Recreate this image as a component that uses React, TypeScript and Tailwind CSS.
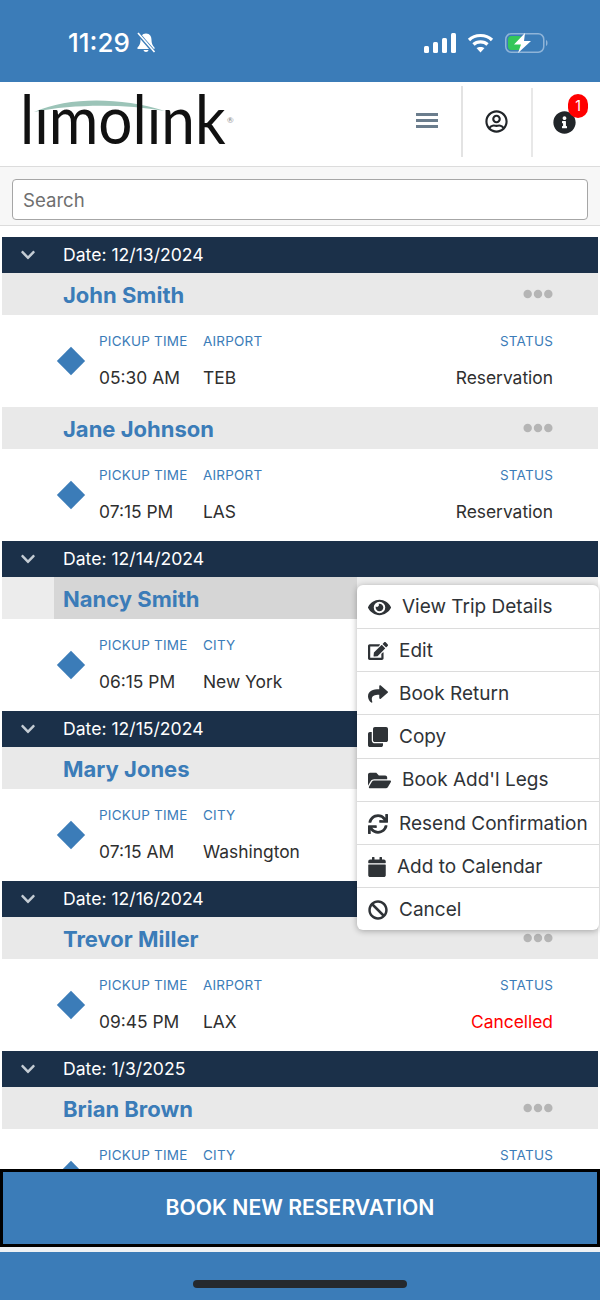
import { FaBan, FaCalendar, FaChevronDown, FaClone, FaEdit, FaEllipsisH, FaEye, FaFolderOpen, FaInfoCircle, FaRegUserCircle, FaShare, FaSync } from 'react-icons/fa';

const trips = [
  { date: '12/13/2024', rows: [
    { name: 'John Smith', label: 'AIRPORT', place: 'TEB', time: '05:30 AM', status: 'Reservation' },
    { name: 'Jane Johnson', label: 'AIRPORT', place: 'LAS', time: '07:15 PM', status: 'Reservation' },
  ] },
  { date: '12/14/2024', rows: [{ name: 'Nancy Smith', label: 'CITY', place: 'New York', time: '06:15 PM', status: '', active: true }] },
  { date: '12/15/2024', rows: [{ name: 'Mary Jones', label: 'CITY', place: 'Washington', time: '07:15 AM', status: '' }] },
  { date: '12/16/2024', rows: [{ name: 'Trevor Miller', label: 'AIRPORT', place: 'LAX', time: '09:45 PM', status: 'Cancelled' }] },
  { date: '1/3/2025', rows: [{ name: 'Brian Brown', label: 'CITY', place: '', time: '', status: '' }] },
];

const menu = [
  { icon: <FaEye className="w-[23px] h-[23px]" />, label: 'View Trip Details' },
  { icon: <FaEdit className="w-5 h-5" />, label: 'Edit' },
  { icon: <FaShare className="w-5 h-5" />, label: 'Book Return' },
  { icon: <FaClone className="w-5 h-5" />, label: 'Copy' },
  { icon: <FaFolderOpen className="w-[23px] h-[23px]" />, label: "Book Add'l Legs" },
  { icon: <FaSync className="w-5 h-5" />, label: 'Resend Confirmation' },
  { icon: <FaCalendar className="w-[18px] h-5" />, label: 'Add to Calendar' },
  { icon: <FaBan className="w-5 h-5" />, label: 'Cancel' },
];

const StatusBar = () => (
  <div className="h-[82px] shrink-0 bg-[#3b7cb8] text-white flex items-center pt-1 pl-[68px] pr-[51px] justify-between">
    <div className="flex items-center gap-[6px]">
      <span className="text-[26px] font-medium leading-none">11:29</span>
      <svg width="20" height="22" viewBox="0 0 20 22" fill="white">
        <path d="M10 1.5 C6 1.5 4.5 4.5 4.5 8 C4.5 11.5 3.5 13.5 1.5 15.5 V17 H18.5 V15.5 C16.5 13.5 15.5 11.5 15.5 8 C15.5 4.5 14 1.5 10 1.5 Z" />
        <path d="M7.5 18 H12.5 C12.2 20.6 7.8 20.6 7.5 18 Z" />
        <path d="M2 1.5 L18.5 20.5" stroke="#3b7cb8" strokeWidth="3.6" />
        <path d="M2 1 L18.5 20" stroke="white" strokeWidth="1.6" />
      </svg>
    </div>
    <div className="flex items-center gap-[11px]">
      <svg width="32" height="20" viewBox="0 0 32 20" fill="white">
        <rect x="0" y="13" width="5" height="7" rx="1.5" />
        <rect x="9" y="9" width="5" height="11" rx="1.5" />
        <rect x="18" y="5" width="5" height="15" rx="1.5" />
        <rect x="27" y="0" width="5" height="20" rx="1.5" />
      </svg>
      <svg width="27" height="20" viewBox="0 0 27 20" fill="none" stroke="white" strokeWidth="3.2">
        <path d="M2 7 C8 1 19 1 25 7" />
        <path d="M6.5 11.5 C10 8 17 8 20.5 11.5" />
        <path d="M13.5 19.5 L9.5 15 C11.5 13.5 15.5 13.5 17.5 15 Z" fill="white" stroke="none" />
      </svg>
      <svg width="44" height="20" viewBox="0 0 44 20" fill="none">
        <rect x="0.75" y="0.75" width="38" height="18.5" rx="5.5" stroke="#8fb4d8" strokeWidth="1.5" />
        <rect x="3" y="3" width="14" height="14" rx="3.5" fill="#34c759" />
        <path d="M41 7 C43 7.5 43 12.5 41 13 Z" fill="#8fb4d8" />
        <path d="M20 0 L9 11.5 H16 L13 20 L26 8 H19 Z" fill="white" />
      </svg>
    </div>
  </div>
);

const Header = () => (
  <div className="h-[84px] shrink-0 bg-white flex items-stretch">
    <div className="relative w-[416px] pl-[20px] font-['Lato',sans-serif]">
      <svg className="absolute left-[34px] top-[17px]" width="132" height="14" viewBox="0 0 132 14">
        <path d="M0 13 C35 -2 85 -2 131 12 C90 5 40 5 0 13 Z" fill="#9cc4b8" />
      </svg>
      <span className="relative block w-fit origin-left scale-x-[0.9] text-[67px] leading-[78px] -mt-[3px] font-normal text-[#111]">lımolınk</span>
      <span className="absolute left-[227px] top-[34px] text-[8px] leading-none text-[#888]">®</span>
    </div>
    <div className="w-[45px] flex flex-col justify-center gap-[3px] pb-[7px]">
      <div className="w-[22px] h-[3px] bg-[#6b7d8d]" />
      <div className="w-[22px] h-[3px] bg-[#6b7d8d]" />
      <div className="w-[22px] h-[3px] bg-[#6b7d8d]" />
    </div>
    <div className="w-[70px] flex items-center justify-center border-l-2 border-[#e3e3e3] mt-[4px] mb-[9px] pr-[2px]">
      <FaRegUserCircle className="w-[23px] h-[23px] text-[#212529]" />
    </div>
    <div className="relative flex-1 flex items-center justify-center border-l-2 border-[#e8e8e8] mt-[6px] mb-[9px] pr-[5px]">
      <FaInfoCircle className="w-[23px] h-[23px] text-[#212529]" />
      <span className="absolute left-[35px] top-[6px] w-5 h-6 rounded-full bg-[#ff0000] text-white text-[14px] leading-6 text-center">1</span>
    </div>
  </div>
);

const Column = ({ label, value, tone }: { label: string; value: string; tone?: string }) => (
  <>
    <div className="h-4 text-[13.5px] leading-4 text-[#3b7cb8] tracking-[0.2px]">{label}</div>
    <div className={`mt-[18px] h-[22px] text-[17.4px] leading-[22px] ${tone ?? 'text-[#2f2f2f]'}`}>{value}</div>
  </>
);

const TripRow = ({ row }: { row: (typeof trips)[number]['rows'][number] }) => (
  <div>
    <div className={`h-[42px] flex items-center justify-between pr-[45px] ${row.active ? 'bg-[#ececec]' : 'bg-[#e9e9e9] pl-[61px]'}`}>
      {row.active ? (
        <div className="ml-[52px] w-[303px] h-full bg-[#d6d6d6] flex items-center pl-[9px] pt-[2px] text-[22px] font-bold text-[#3b7cb8]">{row.name}</div>
      ) : (
        <span className="text-[22px] font-bold text-[#3b7cb8] pt-[2px]">{row.name}</span>
      )}
      <FaEllipsisH className="w-[30px] h-[30px] text-[#b5b5b5]" />
    </div>
    <div className="h-[92px] bg-white flex items-center pl-[54px] pr-[45px]">
      <div className="w-[29px] h-[30px] flex items-center justify-center">
        <div className="w-[20px] h-[20px] rotate-45 bg-[#3b7cb8]" />
      </div>
      <div className="ml-[14px] w-[104px]">
        <Column label="PICKUP TIME" value={row.time} />
      </div>
      <div className="flex-1">
        <Column label={row.label} value={row.place} />
      </div>
      <div className="text-right">
        <Column label="STATUS" value={row.status} tone={row.status === 'Cancelled' ? 'text-[#ff0000]' : undefined} />
      </div>
    </div>
  </div>
);

export default function App() {
  return (
    <div className="relative w-[600px] h-[1300px] overflow-hidden flex flex-col bg-white font-['Inter',sans-serif]">
      <StatusBar />
      <Header />
      <div className="h-[60px] shrink-0 bg-[#f7f7f7] border-y border-[#dcdcdc] px-3 pt-[12px]">
        <input
          placeholder="Search"
          className="block w-full h-[41px] bg-white border border-[#a6a6a6] rounded-[4px] px-[10px] text-[18.6px] placeholder:text-[#6f6f6f] outline-none"
        />
      </div>
      <div className="flex-1 min-h-0 overflow-hidden pt-[11px] px-[2px]">
        {trips.map((group) => (
          <div key={group.date}>
            <div className="h-9 bg-[#1b3049] flex items-center text-white">
              <FaChevronDown className="ml-[18px] w-4 h-4 text-[#c4ccd4]" />
              <span className="ml-[27px] text-[17.6px]">Date: {group.date}</span>
            </div>
            {group.rows.map((row) => <TripRow key={row.name} row={row} />)}
          </div>
        ))}
      </div>
      <button className="h-[78px] shrink-0 bg-[#3b7cb8] border-[3px] border-black text-white text-[21.2px] font-semibold">
        BOOK NEW RESERVATION
      </button>
      <div className="h-[5px] shrink-0 bg-[#eef1f4]" />
      <div className="h-[48px] shrink-0 bg-[#3b7cb8] flex justify-center pt-[28px]">
        <div className="w-[214px] h-2 rounded-full bg-[#25292e]" />
      </div>

      {/* trip actions dropdown */}
      <div className="absolute left-[357px] top-[585px] w-[242px] rounded-[6px] bg-white shadow-[0_1px_6px_rgba(0,0,0,0.3)] text-[#2f3337]">
        {menu.map((item, i) => (
          <div
            key={item.label}
            className={`h-[43.15px] pl-[11px] pt-[2px] flex items-center gap-[11px] text-[19px] ${i > 0 ? 'border-t border-[#dcdcdc]' : ''}`}
          >
            {item.icon}
            <span>{item.label}</span>
          </div>
        ))}
      </div>
    </div>
  );
}
